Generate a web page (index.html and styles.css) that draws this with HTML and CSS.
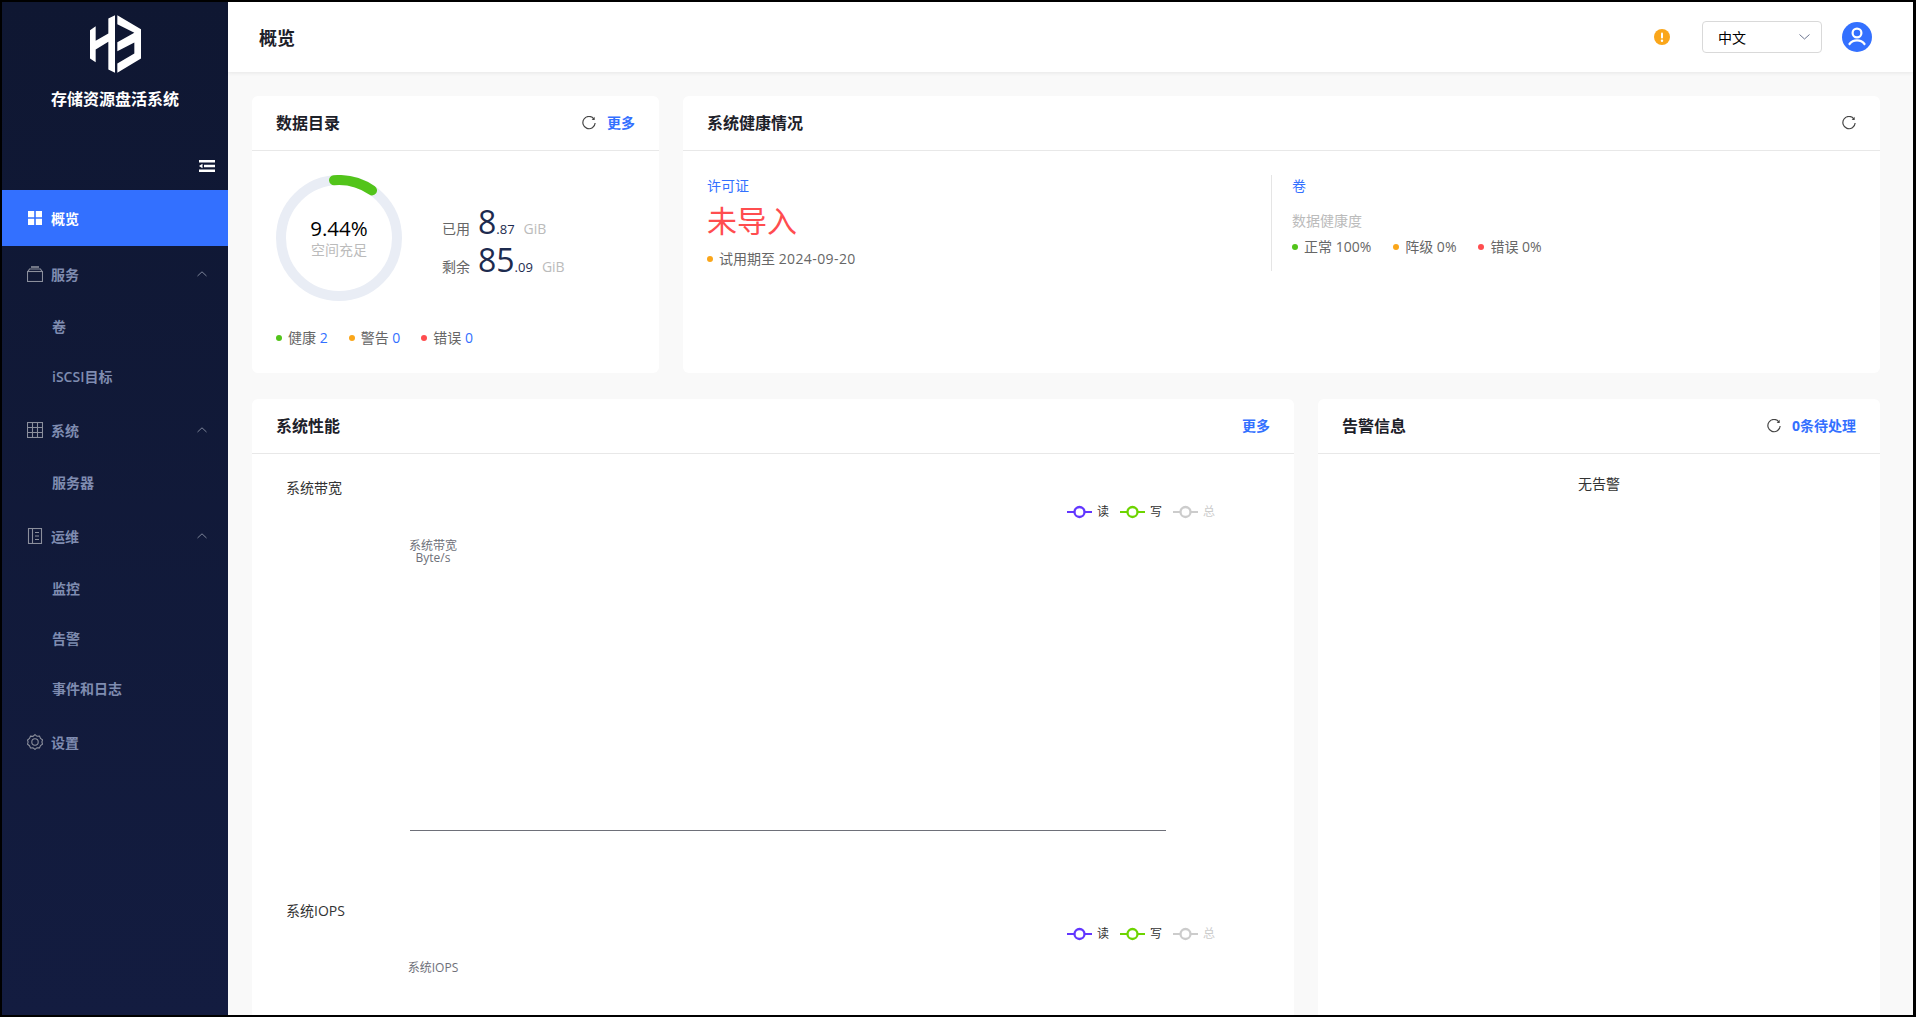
FILE: index.html
```html
<!DOCTYPE html>
<html lang="zh-CN">
<head>
<meta charset="utf-8">
<title>存储资源盘活系统</title>
<link rel="stylesheet" href="styles.css">
</head>
<body>
<div class="app">
  <aside class="sidebar">
    <div class="brand">
      <svg class="logo" viewBox="270 45 153 173">
        <polygon fill="#fff" points="270,90 287,78 287,122 325,100 325,55 345,45 345,218 325,208 325,125 287,148 287,186 270,175"/>
        <polygon fill="#fff" points="352,45 423,87 423,175 352,218 352,190 403,160 403,127 352,153 352,126 403,98 352,72"/>
      </svg>
      <div class="brand-name">存储资源盘活系统</div>
    </div>
    <div class="collapse-row">
      <svg class="collapse" viewBox="0 0 16 12"><path fill="#fff" d="M0 0h16v2.4H0zM5 4.8h11v2.4H5zM0 9.6h16V12H0zM0 6l3.5-2.2v4.4z"/></svg>
    </div>
    <nav class="nav">
      <a class="nav-item active">
        <svg class="nav-icon" viewBox="0 0 16 16"><path fill="#fff" d="M1 1h6.2v6.2H1zM8.8 1H15v6.2H8.8zM1 8.8h6.2V15H1zM8.8 8.8H15V15H8.8z"/></svg>
        <span>概览</span>
      </a>
      <a class="nav-item">
        <svg class="nav-icon" viewBox="0 0 16 16" fill="none" stroke="#8b8f9c" stroke-width="1.1"><rect x=".5" y="5.5" width="15" height="10"/><path d="M1 5.5 2.5 3h11L15 5.5"/><path d="M4 1h8" stroke-width="1.6"/></svg>
        <span>服务</span>
        <svg class="chev" viewBox="0 0 10 6"><path d="M.5 5 5 .8 9.500 5" fill="none" stroke="#7d8599"/></svg>
      </a>
      <a class="nav-sub">卷</a>
      <a class="nav-sub">iSCSI目标</a>
      <a class="nav-item">
        <svg class="nav-icon" viewBox="0 0 16 16" fill="none" stroke="#8b8f9c" stroke-width="1.1"><rect x=".5" y=".5" width="15" height="15"/><path d="M.5 5.500h15M.5 10.500h15M5.500.5v15M10.500.5v15"/></svg>
        <span>系统</span>
        <svg class="chev" viewBox="0 0 10 6"><path d="M.5 5 5 .8 9.500 5" fill="none" stroke="#7d8599"/></svg>
      </a>
      <a class="nav-sub">服务器</a>
      <a class="nav-item">
        <svg class="nav-icon" viewBox="0 0 16 16" fill="none" stroke="#8b8f9c" stroke-width="1.1"><rect x="1.500" y=".5" width="13" height="15"/><path d="M5.500.5v15M8 4.500h4M8 8h4M8 11.500h4"/></svg>
        <span>运维</span>
        <svg class="chev" viewBox="0 0 10 6"><path d="M.5 5 5 .8 9.500 5" fill="none" stroke="#7d8599"/></svg>
      </a>
      <a class="nav-sub">监控</a>
      <a class="nav-sub">告警</a>
      <a class="nav-sub">事件和日志</a>
      <a class="nav-item">
        <svg class="nav-icon" viewBox="0 0 16 16" fill="none" stroke="#8b8f9c" stroke-width="1.1"><path d="M8 .6 10 2.300l2.500-.2 1 2.300 2 1.500-.6 2.100.6 2.100-2 1.500-1 2.300-2.500-.2L8 15.400l-2-1.600-2.500.2-1-2.300-2-1.500.6-2.100-.6-2.100 2-1.500 1-2.300 2.500.2z"/><circle cx="8" cy="8" r="3.200"/></svg>
        <span>设置</span>
      </a>
    </nav>
  </aside>

  <div class="main">
    <header class="topbar">
      <div class="page-title">概览</div>
      <div class="top-actions">
        <svg class="warn" viewBox="0 0 16 16"><circle cx="8" cy="8" r="8" fill="#faa61a"/><rect x="7" y="3.500" width="2" height="6" rx="1" fill="#fff"/><circle cx="8" cy="11.800" r="1.200" fill="#fff"/></svg>
        <div class="lang">
          <span>中文</span>
          <svg class="lang-chev" viewBox="0 0 11 6"><path d="M.5.5 5.500 5 10.500.5" fill="none" stroke="#6d7690"/></svg>
        </div>
        <svg class="avatar" viewBox="0 0 30 30"><circle cx="15" cy="15" r="15" fill="#3370ff"/><circle cx="15" cy="11" r="4.400" fill="none" stroke="#fff" stroke-width="2.200"/><path d="M7.500 22c2-2.700 4.500-3.700 7.500-3.700s5.500 1 7.500 3.700" fill="none" stroke="#fff" stroke-width="2.200" stroke-linecap="round"/></svg>
      </div>
    </header>

    <main class="content">
      <div class="row-top">
        <section class="card">
          <div class="card-head">
            <h2>数据目录</h2>
            <div class="head-actions">
              <svg class="refresh" viewBox="0 0 13 13"><path d="M11 2.600A5.700 5.700 0 1 0 12.200 6.500" fill="none" stroke="#444" stroke-width="1.100"/><path d="M11.800.8v2.800H9z" fill="#444"/></svg>
              <a class="link">更多</a>
            </div>
          </div>
          <div class="catalog">
            <div class="catalog-main">
              <div class="ring">
                <svg class="ring-svg" viewBox="0 0 126 126">
                  <circle cx="63" cy="63" r="58" fill="none" stroke="#e9edf5" stroke-width="10"/>
                  <path d="M58 5.200A58 58 0 0 1 96 15.400" fill="none" stroke="#52c41a" stroke-width="10" stroke-linecap="round"/>
                </svg>
                <div class="ring-text">
                  <div class="ring-value">9.44%</div>
                  <div class="ring-label">空间充足</div>
                </div>
              </div>
              <div class="usage">
                <div class="usage-row"><span class="usage-label">已用</span><span class="big">8</span><span class="frac">.87</span><span class="unit">GiB</span></div>
                <div class="usage-row"><span class="usage-label">剩余</span><span class="big">85</span><span class="frac">.09</span><span class="unit">GiB</span></div>
              </div>
            </div>
            <div class="legend catalog-legend">
              <span class="legend-item"><i class="dot green"></i>健康 <b class="num">2</b></span>
              <span class="legend-item"><i class="dot orange"></i>警告 <b class="num">0</b></span>
              <span class="legend-item"><i class="dot red"></i>错误 <b class="num">0</b></span>
            </div>
          </div>
        </section>

        <section class="card">
          <div class="card-head">
            <h2>系统健康情况</h2>
            <div class="head-actions">
              <svg class="refresh" viewBox="0 0 13 13"><path d="M11 2.600A5.700 5.700 0 1 0 12.200 6.500" fill="none" stroke="#444" stroke-width="1.100"/><path d="M11.800.8v2.800H9z" fill="#444"/></svg>
            </div>
          </div>
          <div class="health">
            <div class="license">
              <div class="blue-label">许可证</div>
              <div class="license-state">未导入</div>
              <div class="legend-item"><i class="dot orange"></i>试用期至 <span class="date">2024-09-20</span></div>
            </div>
            <div class="volume">
              <div class="blue-label">卷</div>
              <div class="muted-label">数据健康度</div>
              <div class="legend health-legend">
                <span class="legend-item"><i class="dot green"></i>正常 100%</span>
                <span class="legend-item"><i class="dot orange"></i>阵级 0%</span>
                <span class="legend-item"><i class="dot red"></i>错误 0%</span>
              </div>
            </div>
          </div>
        </section>
      </div>

      <div class="row-bottom">
        <section class="card">
          <div class="card-head">
            <h2>系统性能</h2>
            <div class="head-actions"><a class="link">更多</a></div>
          </div>
          <div class="chart">
            <div class="chart-title">系统带宽</div>
            <svg class="chart-canvas" viewBox="0 0 1042 398">
              <g class="lg lg-read" transform="translate(815 13)"><path d="M0 0h25"/><circle cx="12.500" r="5"/></g>
              <text class="lg-text" x="845" y="17">读</text>
              <g class="lg lg-write" transform="translate(868 13)"><path d="M0 0h25"/><circle cx="12.500" r="5"/></g>
              <text class="lg-text" x="898" y="17">写</text>
              <g class="lg lg-total" transform="translate(921 13)"><path d="M0 0h25"/><circle cx="12.500" r="5"/></g>
              <text class="lg-text off" x="951" y="17">总</text>
              <text class="axis-text" x="181" y="51">系统带宽</text>
              <text class="axis-text" x="181" y="63">Byte/s</text>
              <path class="axis" d="M158 331.500h756"/>
            </svg>
          </div>
          <div class="chart">
            <div class="chart-title">系统IOPS</div>
            <svg class="chart-canvas" viewBox="0 0 1042 398">
              <g class="lg lg-read" transform="translate(815 12)"><path d="M0 0h25"/><circle cx="12.500" r="5"/></g>
              <text class="lg-text" x="845" y="16">读</text>
              <g class="lg lg-write" transform="translate(868 12)"><path d="M0 0h25"/><circle cx="12.500" r="5"/></g>
              <text class="lg-text" x="898" y="16">写</text>
              <g class="lg lg-total" transform="translate(921 12)"><path d="M0 0h25"/><circle cx="12.500" r="5"/></g>
              <text class="lg-text off" x="951" y="16">总</text>
              <text class="axis-text" x="181" y="50">系统IOPS</text>
            </svg>
          </div>
        </section>

        <section class="card">
          <div class="card-head">
            <h2>告警信息</h2>
            <div class="head-actions">
              <svg class="refresh" viewBox="0 0 13 13"><path d="M11 2.600A5.700 5.700 0 1 0 12.200 6.500" fill="none" stroke="#444" stroke-width="1.100"/><path d="M11.800.8v2.800H9z" fill="#444"/></svg>
              <a class="link">0条待处理</a>
            </div>
          </div>
          <div class="empty">无告警</div>
        </section>
      </div>
    </main>
  </div>
</div>
</body>
</html>
```
FILE: styles.css
```css
* { box-sizing: border-box; }
html, body { margin: 0; height: 100%; overflow: hidden; }
body {
  background: #000;
  font-family: "Open Sans", "Noto Sans CJK SC", sans-serif;
  font-size: 14px;
  color: #666;
}
.app {
  display: flex;
  height: 1017px;
  padding: 2px 3px 2px 2px;
}
.sidebar {
  flex: 0 0 226px;
  background: linear-gradient(180deg, #0f1732 0%, #131c40 100%);
  display: flex;
  flex-direction: column;
}
.brand {
  display: flex;
  flex-direction: column;
  align-items: center;
  padding-top: 13px;
}
.logo { width: 51px; height: 58px; display: block; }
.brand-name {
  margin-top: 14px;
  color: #fff;
  font-size: 16px;
  font-weight: 700;
  line-height: 24px;
}
.collapse-row {
  display: flex;
  justify-content: flex-end;
  padding: 49px 13px 0 0;
  height: 79px;
}
.collapse { width: 16px; height: 12px; display: block; }
.nav { display: flex; flex-direction: column; }
.nav-item {
  display: flex;
  align-items: center;
  height: 56px;
  padding-left: 25px;
  color: #7f8cb0;
  font-weight: 600;
}
.nav-item.active { background: #3370ff; color: #fff; }
.nav-icon { width: 16px; height: 16px; margin-right: 8px; flex: none; }
.chev { width: 10px; height: 6px; margin-left: auto; margin-right: 21px; }
.nav-sub {
  display: flex;
  align-items: center;
  height: 50px;
  padding: 0 0 2px 50px;
  color: #7f8cb0;
  font-weight: 600;
}
.main {
  flex: 1;
  min-width: 0;
  display: flex;
  flex-direction: column;
  background: #f9f9f9;
}
.topbar {
  flex: 0 0 70px;
  background: #fff;
  box-shadow: 0 1px 4px rgba(0, 0, 0, .08);
  display: flex;
  align-items: center;
  justify-content: space-between;
  padding: 0 41px 0 31px;
}
.page-title { font-size: 18px; font-weight: 700; color: #1d2129; }
.top-actions { display: flex; align-items: center; }
.warn { width: 16px; height: 16px; margin-right: 32px; }
.lang {
  width: 120px;
  height: 32px;
  border: 1px solid #d9d9d9;
  border-radius: 4px;
  display: flex;
  align-items: center;
  justify-content: space-between;
  padding: 0 11px 0 15px;
  color: #000;
  font-size: 14px;
  margin-right: 20px;
}
.lang-chev { width: 11px; height: 6px; }
.avatar { width: 30px; height: 30px; }
.content {
  flex: 1;
  min-height: 0;
  overflow: hidden;
  padding: 24px 33px 0 24px;
}
.row-top {
  display: grid;
  grid-template-columns: 407px 1fr;
  column-gap: 24px;
  height: 277px;
}
.row-bottom {
  display: grid;
  grid-template-columns: 1042px 1fr;
  column-gap: 24px;
  margin-top: 26px;
}
.card { background: #fff; border-radius: 6px; min-width: 0; }
.card-head {
  height: 55px;
  border-bottom: 1px solid #e8e8e8;
  display: flex;
  align-items: center;
  justify-content: space-between;
  padding: 0 24px 2px;
}
.card-head h2 { margin: 0; font-size: 16px; font-weight: 700; color: #1d2129; }
.head-actions { display: flex; align-items: center; gap: 11px; }
.refresh { width: 14px; height: 14px; display: block; margin-top: 1px; }
.link { color: #3370ff; font-weight: 700; font-size: 14px; }
.catalog { padding: 24px 24px 0; }
.catalog-main { display: flex; align-items: center; }
.ring { display: grid; width: 126px; height: 126px; flex: none; }
.ring-svg, .ring-text { grid-area: 1 / 1; }
.ring-svg { width: 126px; height: 126px; display: block; }
.ring-text { text-align: center; align-self: center; }
.ring-value { font-size: 20.5px; line-height: 22px; color: #000; }
.ring-label { font-size: 14px; line-height: 20px; margin-top: 1px; color: #bbb; }
.usage { margin: 6px 0 0 40px; }
.usage-row { display: flex; align-items: baseline; height: 38px; color: #1d2b4f; }
.usage-label { font-size: 14px; color: #666; width: 36px; }
.big { font-size: 32px; line-height: 38px; }
.frac { font-size: 13px; }
.unit { font-size: 14px; color: #bbb; margin-left: 9px; }
.legend { display: flex; }
.catalog-legend { margin-top: 26px; gap: 21px; }
.legend-item { display: flex; align-items: center; line-height: 22px; color: #666; white-space: pre; }
.date { letter-spacing: .4px; }
.dot { width: 6px; height: 6px; border-radius: 50%; margin-right: 6px; flex: none; }
.green { background: #52c41a; }
.orange { background: #faa61a; }
.red { background: #ff4d4f; }
.num { font-weight: 400; color: #3370ff; }
.health { display: flex; padding-top: 24px; }
.license { width: 588px; padding-left: 24px; height: 96px; }
.blue-label { color: #3370ff; line-height: 22px; }
.license-state { color: #ff4d4f; font-size: 30px; line-height: 40px; margin-top: 4px; margin-bottom: 7px; }
.volume { flex: 1; border-left: 1px solid #e5e5e5; padding-left: 20px; height: 96px; }
.muted-label { color: #bbb; line-height: 22px; margin-top: 13px; }
.health-legend { margin-top: 4px; gap: 22px; }
.chart { height: 423px; padding-top: 24px; overflow: hidden; }
.chart-title { padding-left: 34px; line-height: 20px; margin-bottom: 1px; color: #333; }
.chart-canvas { display: block; width: 1042px; height: 398px; }
.lg path { stroke-width: 2; fill: none; }
.lg circle { fill: #fff; stroke-width: 2.3; }
.lg-read path, .lg-read circle { stroke: #6236ff; }
.lg-write path, .lg-write circle { stroke: #6dd400; }
.lg-total path, .lg-total circle { stroke: #ccc; }
.lg-text { font-size: 12px; fill: #333; }
.lg-text.off { fill: #ccc; }
.axis-text { font-size: 12px; fill: #6e7079; text-anchor: middle; }
.axis { stroke: #6e7079; stroke-width: 1; fill: none; }
.empty { text-align: center; padding-top: 19px; line-height: 22px; color: #333; }
```
